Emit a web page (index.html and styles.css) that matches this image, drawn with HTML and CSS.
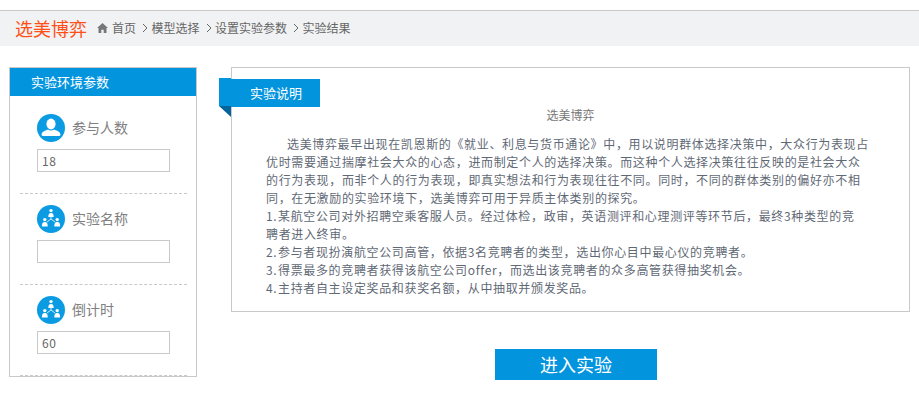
FILE: index.html
```html
<!DOCTYPE html>
<html lang="en">
<head>
    <meta charset="UTF-8">
    <title>选美博弈</title>
    <link rel="stylesheet" href="styles.css">
</head>
<body>

    <header class="top-bar">
        <span class="logo">选美博弈</span>
        <nav class="crumbs">
            <svg class="home-icon" viewBox="0 0 12 11"><path d="M6 0 L12 5.6 L10.4 5.6 L10.4 11 L7.3 11 L7.3 7.4 L4.7 7.4 L4.7 11 L1.6 11 L1.6 5.6 L0 5.6 Z"/></svg>
            <a>首页</a>
            <svg class="sep" viewBox="0 0 6 10"><path d="M1 1 L5 5 L1 9"/></svg>
            <a>模型选择</a>
            <svg class="sep" viewBox="0 0 6 10"><path d="M1 1 L5 5 L1 9"/></svg>
            <a>设置实验参数</a>
            <svg class="sep" viewBox="0 0 6 10"><path d="M1 1 L5 5 L1 9"/></svg>
            <a>实验结果</a>
        </nav>
    </header>

    <main class="content">
        <aside class="params">
            <h3 class="params-title">实验环境参数</h3>
            <div class="param-list">
                <div class="param">
                    <div class="param-label">
                        <svg class="param-icon" viewBox="0 0 28 28">
                            <circle class="disc" cx="14" cy="14" r="14"/>
                            <ellipse class="fig" cx="14" cy="10" rx="4.6" ry="5.4"/>
                            <path class="fig" d="M4.5 20.5 C5 17.5 8.5 16.5 11 15.5 C12.5 16.8 15.5 16.8 17 15.5 C19.5 16.5 23 17.5 23.5 20.5 C23.5 22 22.5 22 21 22 L7 22 C5.5 22 4.5 22 4.5 20.5 Z"/>
                        </svg>
                        <span>参与人数</span>
                    </div>
                    <input class="param-input" type="text" value="18">
                </div>
                <div class="param">
                    <div class="param-label">
                        <svg class="param-icon" viewBox="0 0 28 28">
                            <use href="#group"/>
                        </svg>
                        <span>实验名称</span>
                    </div>
                    <input class="param-input" type="text">
                </div>
                <div class="param">
                    <div class="param-label">
                        <svg class="param-icon" viewBox="0 0 28 28">
                            <use href="#group"/>
                        </svg>
                        <span>倒计时</span>
                    </div>
                    <input class="param-input" type="text" value="60">
                </div>
            </div>
        </aside>

        <section class="intro-col">
            <div class="intro">
                <div class="ribbon">实验说明</div>
                <h4 class="intro-title">选美博弈</h4>
                <div class="intro-text">
                    <p class="lead">选美博弈最早出现在凯恩斯的《就业、利息与货币通论》中，用以说明群体选择决策中，大众行为表现占优时需要通过揣摩社会大众的心态，进而制定个人的选择决策。而这种个人选择决策往往反映的是社会大众的行为表现，而非个人的行为表现，即真实想法和行为表现往往不同。同时，不同的群体类别的偏好亦不相同，在无激励的实验环境下，选美博弈可用于异质主体类别的探究。</p>
                    <p><span class="num">1.</span>某航空公司对外招聘空乘客服人员。经过体检，政审，英语测评和心理测评等环节后，最终3种类型的竞<br>聘者进入终审。</p>
                    <p><span class="num">2.</span>参与者现扮演航空公司高管，依据3名竞聘者的类型，选出你心目中最心仪的竞聘者。</p>
                    <p><span class="num">3.</span>得票最多的竞聘者获得该航空公司offer，而选出该竞聘者的众多高管获得抽奖机会。</p>
                    <p><span class="num">4.</span>主持者自主设定奖品和获奖名额，从中抽取并颁发奖品。</p>
                </div>
            </div>
            <button class="enter-btn" type="button">进入实验</button>
        </section>
    </main>

    <!-- shared icon -->
    <svg class="defs" width="0" height="0">
        <defs>
            <g id="group">
                <circle class="disc" cx="14" cy="14" r="14"/>
                <path class="link" d="M14 11 L14 14 M14 14 L10 17 M14 14 L18 17"/>
                <circle class="fig" cx="14" cy="5.6" r="1.7"/>
                <path class="fig" d="M11.3 12 C11.3 8.8 12.3 8 14 8 C15.7 8 16.7 8.8 16.7 12 Z"/>
                <circle class="fig" cx="7.8" cy="14.6" r="1.7"/>
                <path class="fig" d="M4.9 21.5 C4.9 17.8 6 17 7.8 17 C9.6 17 10.7 17.8 10.7 21.5 Z"/>
                <circle class="fig" cx="20.2" cy="14.6" r="1.7"/>
                <path class="fig" d="M17.3 21.5 C17.3 17.8 18.4 17 20.2 17 C22 17 23.1 17.8 23.1 21.5 Z"/>
            </g>
        </defs>
    </svg>

</body>
</html>
```

FILE: styles.css
```css
:root {
    --blue: #0394de;
    --line: #c9c9c9;
    --text: #5f6975;
    --font: "Noto Sans CJK SC", "Liberation Sans", sans-serif;
}

body {
    margin: 0;
    font-family: var(--font);
    font-size: 12px;
    color: var(--text);
    background: #fff;
    overflow: hidden;
}

/* --- Top bar --- */
.top-bar {
    margin-top: 10px;
    height: 33px;
    border-top: 1px solid var(--line);
    background: #f1f2f4;
    display: flex;
    align-items: center;
    padding: 0 0 2px 15px;
}

.logo {
    font-size: 18px;
    color: #ff4f17;
    margin-right: 10px;
}

.crumbs {
    display: flex;
    align-items: center;
    color: #666;
    font-size: 12px;
}

.home-icon {
    width: 11px;
    height: 10px;
    fill: #777;
    margin-right: 4px;
}

.sep {
    width: 6px;
    height: 10px;
    fill: none;
    stroke: #666;
    stroke-width: 1;
    margin: 0 3.5px 0 6px;
}

/* --- Layout --- */
.content {
    display: flex;
    align-items: flex-start;
    padding: 21px 9px 0 9px;
    gap: 34px;
}

/* --- Left column --- */
.params {
    width: 186px;
    height: 308px;
    flex: none;
    border: 1px solid var(--line);
}

.params-title {
    margin: 0;
    height: 28px;
    line-height: 27px;
    padding-left: 21px;
    background: var(--blue);
    color: #fff;
    font-size: 13px;
    font-weight: normal;
}

.param-list {
    padding: 7px 9px 0 10px;
}

.param {
    padding: 11px 17px 21px 17px;
    border-bottom: 1px dashed var(--line);
}

.param-label {
    display: flex;
    align-items: center;
    gap: 7px;
    font-size: 14px;
    line-height: 26px;
    color: #808080;
    margin-bottom: 7px;
}

.param-label span {
    margin-bottom: 2px;
}

.param-icon {
    width: 28px;
    height: 28px;
    flex: none;
}

.disc { fill: #0a9be2; }
.fig { fill: #fff; }
.link { fill: none; stroke: #fff; stroke-width: 0.8; }

.defs { position: absolute; }

.param-input {
    display: block;
    box-sizing: border-box;
    width: 133px;
    height: 23px;
    padding: 0 0 0 4px;
    border: 1px solid var(--line);
    border-radius: 0;
    outline: none;
    font-family: var(--font);
    font-size: 12px;
    color: #666;
    letter-spacing: 0.5px;
}

/* --- Right column --- */
.intro-col {
    width: 679px;
    flex: none;
}

.intro {
    position: relative;
    box-sizing: border-box;
    height: 245px;
    border: 1px solid var(--line);
    padding: 38px 30px 0 34px;
}

.ribbon {
    position: absolute;
    left: -1px;
    top: 11px;
    width: 89px;
    height: 28px;
    line-height: 27px;
    box-sizing: border-box;
    padding-left: 19px;
    background: var(--blue);
    color: #fff;
    font-size: 13px;
}

.ribbon::before {
    content: '';
    position: absolute;
    left: -12px;
    top: -1px;
    width: 12px;
    height: 28px;
    background: var(--blue);
}

.ribbon::after {
    content: '';
    position: absolute;
    left: -12px;
    top: 27px;
    border-top: 11px solid #06649d;
    border-left: 12px solid transparent;
}

.intro-title {
    margin: 0 0 11px 0;
    padding-right: 4px;
    text-align: center;
    font-size: 12px;
    font-weight: normal;
    line-height: 18px;
    color: #777;
}

.intro-text {
    letter-spacing: 0.65px;
    line-height: 18px;
    width: 606px;
}

.intro-text p {
    margin: 0;
}

.intro-text .lead {
    text-indent: 21px;
}

.num {
    display: inline-block;
    width: 12px;
}

.enter-btn {
    display: block;
    width: 162px;
    height: 31px;
    margin: 37px 0 0 264px;
    padding: 0 0 2px 0;
    border: 0;
    background: var(--blue);
    color: #fff;
    font-family: var(--font);
    font-size: 18px;
}
```
